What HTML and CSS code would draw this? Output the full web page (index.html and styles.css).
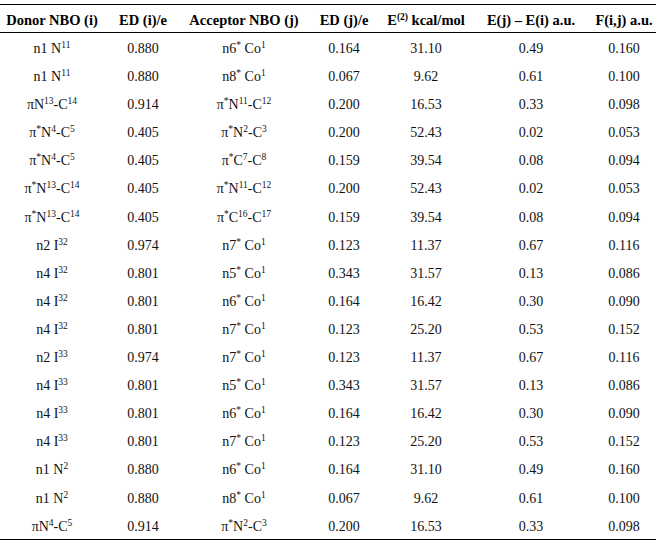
FILE: index.html
```html
<!DOCTYPE html>
<html>
<head>
<meta charset="utf-8">
<link rel="stylesheet" href="styles.css">
</head>
<body>
<table class="nbo">
<colgroup>
<col class="c1"><col class="c2"><col class="c3"><col class="c4"><col class="c5"><col class="c6"><col class="c7">
</colgroup>
<thead>
<tr><th>Donor NBO (i)</th><th>ED (i)/e</th><th>Acceptor NBO (j)</th><th>ED (j)/e</th><th>E<sup>(2)</sup> kcal/mol</th><th>E(j) – E(i) a.u.</th><th>F(i,j) a.u.</th></tr>
</thead>
<tbody>
<tr><td>n1 N<sup>11</sup></td><td>0.880</td><td>n6<sup>*</sup> Co<sup>1</sup></td><td>0.164</td><td>31.10</td><td>0.49</td><td>0.160</td></tr>
<tr><td>n1 N<sup>11</sup></td><td>0.880</td><td>n8<sup>*</sup> Co<sup>1</sup></td><td>0.067</td><td>9.62</td><td>0.61</td><td>0.100</td></tr>
<tr><td>πN<sup>13</sup>-C<sup>14</sup></td><td>0.914</td><td>π<sup>*</sup>N<sup>11</sup>-C<sup>12</sup></td><td>0.200</td><td>16.53</td><td>0.33</td><td>0.098</td></tr>
<tr><td>π<sup>*</sup>N<sup>4</sup>-C<sup>5</sup></td><td>0.405</td><td>π<sup>*</sup>N<sup>2</sup>-C<sup>3</sup></td><td>0.200</td><td>52.43</td><td>0.02</td><td>0.053</td></tr>
<tr><td>π<sup>*</sup>N<sup>4</sup>-C<sup>5</sup></td><td>0.405</td><td>π<sup>*</sup>C<sup>7</sup>-C<sup>8</sup></td><td>0.159</td><td>39.54</td><td>0.08</td><td>0.094</td></tr>
<tr><td>π<sup>*</sup>N<sup>13</sup>-C<sup>14</sup></td><td>0.405</td><td>π<sup>*</sup>N<sup>11</sup>-C<sup>12</sup></td><td>0.200</td><td>52.43</td><td>0.02</td><td>0.053</td></tr>
<tr><td>π<sup>*</sup>N<sup>13</sup>-C<sup>14</sup></td><td>0.405</td><td>π<sup>*</sup>C<sup>16</sup>-C<sup>17</sup></td><td>0.159</td><td>39.54</td><td>0.08</td><td>0.094</td></tr>
<tr><td>n2 I<sup>32</sup></td><td>0.974</td><td>n7<sup>*</sup> Co<sup>1</sup></td><td>0.123</td><td>11.37</td><td>0.67</td><td>0.116</td></tr>
<tr><td>n4 I<sup>32</sup></td><td>0.801</td><td>n5<sup>*</sup> Co<sup>1</sup></td><td>0.343</td><td>31.57</td><td>0.13</td><td>0.086</td></tr>
<tr><td>n4 I<sup>32</sup></td><td>0.801</td><td>n6<sup>*</sup> Co<sup>1</sup></td><td>0.164</td><td>16.42</td><td>0.30</td><td>0.090</td></tr>
<tr><td>n4 I<sup>32</sup></td><td>0.801</td><td>n7<sup>*</sup> Co<sup>1</sup></td><td>0.123</td><td>25.20</td><td>0.53</td><td>0.152</td></tr>
<tr><td>n2 I<sup>33</sup></td><td>0.974</td><td>n7<sup>*</sup> Co<sup>1</sup></td><td>0.123</td><td>11.37</td><td>0.67</td><td>0.116</td></tr>
<tr><td>n4 I<sup>33</sup></td><td>0.801</td><td>n5<sup>*</sup> Co<sup>1</sup></td><td>0.343</td><td>31.57</td><td>0.13</td><td>0.086</td></tr>
<tr><td>n4 I<sup>33</sup></td><td>0.801</td><td>n6<sup>*</sup> Co<sup>1</sup></td><td>0.164</td><td>16.42</td><td>0.30</td><td>0.090</td></tr>
<tr><td>n4 I<sup>33</sup></td><td>0.801</td><td>n7<sup>*</sup> Co<sup>1</sup></td><td>0.123</td><td>25.20</td><td>0.53</td><td>0.152</td></tr>
<tr><td>n1 N<sup>2</sup></td><td>0.880</td><td>n6<sup>*</sup> Co<sup>1</sup></td><td>0.164</td><td>31.10</td><td>0.49</td><td>0.160</td></tr>
<tr><td>n1 N<sup>2</sup></td><td>0.880</td><td>n8<sup>*</sup> Co<sup>1</sup></td><td>0.067</td><td>9.62</td><td>0.61</td><td>0.100</td></tr>
<tr><td>πN<sup>4</sup>-C<sup>5</sup></td><td>0.914</td><td>π<sup>*</sup>N<sup>2</sup>-C<sup>3</sup></td><td>0.200</td><td>16.53</td><td>0.33</td><td>0.098</td></tr>
</tbody>
</table>
</body>
</html>
```
FILE: styles.css
```css
html, body {
  margin: 0;
  padding: 0;
  background: #fff;
}
body {
  font-family: "Liberation Serif", "Times New Roman", serif;
  font-size: 14px;
  color: #111;
}
.nbo {
  margin-top: 4px;
  width: 656px;
  border-collapse: collapse;
  table-layout: fixed;
  border-top: 1px solid #000;
  border-bottom: 1px solid #000;
}
.c1 { width: 104px; }
.c2 { width: 78px; }
.c3 { width: 124px; }
.c4 { width: 76px; }
.c5 { width: 88px; }
.c6 { width: 122px; }
.c7 { width: 64px; }
.nbo th {
  font-size: 14.5px;
  font-weight: bold;
  color: #000;
  text-align: center;
  white-space: nowrap;
  line-height: 16px;
  padding: 7px 0 4px;
  border-bottom: 1px solid #000;
}
.nbo td {
  text-align: center;
  white-space: nowrap;
  line-height: 16px;
  padding: 8px 0 4.1px;
}
.nbo sup {
  font-size: 9.5px;
  line-height: 0;
  vertical-align: 5px;
}
```
